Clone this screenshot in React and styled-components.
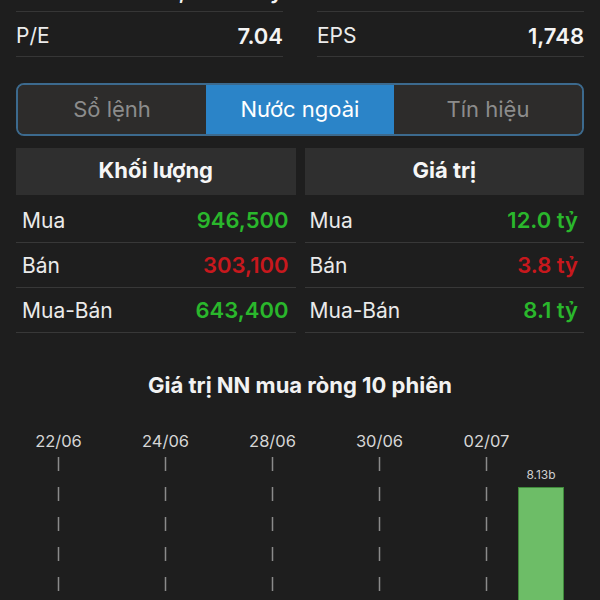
import React from "react";
import styled, { createGlobalStyle } from "styled-components";

const Global = createGlobalStyle`
  html, body { margin: 0; padding: 0; background: #1e1e1e; overflow: hidden; }
  body { font-family: Inter, "Noto Sans", "Liberation Sans", sans-serif; color: #ececec; }
  * { box-sizing: border-box; }
`;

const Page = styled.div`
  width: 600px;
  height: 600px;
  overflow: hidden;
  background: #1e1e1e;
`;

const Scroller = styled.div`
  margin-top: -33px;
  padding: 0 16px;
`;

const StatGrid = styled.div`
  display: grid;
  grid-template-columns: 1fr 1fr;
  column-gap: 34px;
`;

const StatCol = styled.div`
  display: flex;
  flex-direction: column;
`;

const StatRow = styled.div`
  height: 45px;
  padding-top: 3px;
  display: flex;
  align-items: center;
  justify-content: space-between;
  border-bottom: 1px solid #363636;
`;

const StatLabel = styled.span`
  color: #ececec;
  font-size: 21px;
  font-weight: 400;
`;

const StatValue = styled.span`
  color: #f4f4f4;
  font-size: 22px;
  font-weight: 600;
`;

const Tabs = styled.div`
  margin-top: 26px;
  height: 53px;
  display: grid;
  grid-template-columns: 1fr 1fr 1fr;
  border: 2px solid #3c6a8e;
  border-radius: 8px;
  overflow: hidden;
  background: #2d2c2b;
`;

const Tab = styled.div`
  display: flex;
  align-items: center;
  justify-content: center;
  padding-bottom: 2px;
  font-size: 22px;
  color: ${(p) => (p.$active ? "#ffffff" : "#8c8c8c")};
  background: ${(p) => (p.$active ? "#2b84c8" : "#2d2c2b")};
`;

const Tables = styled.div`
  margin-top: 12px;
  display: grid;
  grid-template-columns: 1fr 1fr;
  column-gap: 9px;
`;

const Table = styled.div`
  display: flex;
  flex-direction: column;
`;

const Header = styled.div`
  height: 47px;
  background: #2f2f2f;
  display: flex;
  align-items: center;
  justify-content: center;
  padding-bottom: 3px;
  font-size: 22px;
  font-weight: 700;
  color: #f6f6f6;
  margin-bottom: 3px;
`;

const Row = styled.div`
  height: 45px;
  display: flex;
  align-items: center;
  justify-content: space-between;
  padding: 0 ${(p) => p.$padR}px 0 ${(p) => p.$padL}px;
  border-bottom: 1px solid #383838;
`;

const RowLabel = styled.span`
  font-size: 21px;
  color: #eaeaea;
`;

const RowValue = styled.span`
  font-size: 22px;
  font-weight: 600;
  color: ${(p) => (p.$tone === "up" ? "#2ab72c" : "#c8181d")};
`;

const ChartTitle = styled.div`
  margin-top: 40px;
  height: 24px;
  line-height: 24px;
  text-align: center;
  font-size: 22px;
  font-weight: 700;
  color: #f2f2f2;
`;

const ChartSvg = styled.svg`
  display: block;
  margin: 23px -16px 0;
  width: 600px;
  height: 180px;
`;

const volume = [
  { label: "Mua", value: "946,500", tone: "up" },
  { label: "Bán", value: "303,100", tone: "down" },
  { label: "Mua-Bán", value: "643,400", tone: "up" },
];

const valueRows = [
  { label: "Mua", value: "12.0 tỷ", tone: "up" },
  { label: "Bán", value: "3.8 tỷ", tone: "down" },
  { label: "Mua-Bán", value: "8.1 tỷ", tone: "up" },
];

const dates = [
  { x: 58.5, t: "22/06" },
  { x: 165.5, t: "24/06" },
  { x: 272.5, t: "28/06" },
  { x: 379.5, t: "30/06" },
  { x: 486.5, t: "02/07" },
];

function Chart() {
  return (
    <ChartSvg viewBox="0 0 600 180">
      {dates.map((d) => (
        <g key={d.t}>
          <text
            x={d.x}
            y={27}
            textAnchor="middle"
            fontSize="16.5"
            fill="#d6d6d6"
            fontFamily="Inter, 'Noto Sans', sans-serif"
          >
            {d.t}
          </text>
          <line
            x1={d.x}
            x2={d.x}
            y1={37}
            y2={180}
            stroke="#8a8a8a"
            strokeWidth="1.5"
            strokeDasharray="14 16"
          />
        </g>
      ))}
      <text
        x={541}
        y={58.5}
        textAnchor="middle"
        fontSize="12"
        fill="#cfcfcf"
        fontFamily="Inter, 'Noto Sans', sans-serif"
      >
        8.13b
      </text>
      <rect x={518.5} y={67.5} width={45} height={120} fill="#6dbd67" stroke="#3f8a3b" strokeWidth="1" />
    </ChartSvg>
  );
}

export default function App() {
  return (
    <Page>
      <Global />
      <Scroller>
        <StatGrid>
          <StatCol>
            <StatRow>
              <StatLabel>Vốn hóa</StatLabel>
              <StatValue>1,812.35 tỷ</StatValue>
            </StatRow>
            <StatRow>
              <StatLabel>P/E</StatLabel>
              <StatValue>7.04</StatValue>
            </StatRow>
          </StatCol>
          <StatCol>
            <StatRow>
              <StatLabel>Beta</StatLabel>
              <StatValue>0.86</StatValue>
            </StatRow>
            <StatRow>
              <StatLabel>EPS</StatLabel>
              <StatValue>1,748</StatValue>
            </StatRow>
          </StatCol>
        </StatGrid>

        <Tabs>
          <Tab>Sổ lệnh</Tab>
          <Tab $active>Nước ngoài</Tab>
          <Tab>Tín hiệu</Tab>
        </Tabs>

        <Tables>
          <Table>
            <Header>Khối lượng</Header>
            {volume.map((r) => (
              <Row key={r.label} $padL={6} $padR={7}>
                <RowLabel>{r.label}</RowLabel>
                <RowValue $tone={r.tone}>{r.value}</RowValue>
              </Row>
            ))}
          </Table>
          <Table>
            <Header>Giá trị</Header>
            {valueRows.map((r) => (
              <Row key={r.label} $padL={5} $padR={6}>
                <RowLabel>{r.label}</RowLabel>
                <RowValue $tone={r.tone}>{r.value}</RowValue>
              </Row>
            ))}
          </Table>
        </Tables>

        <ChartTitle>Giá trị NN mua ròng 10 phiên</ChartTitle>
        <Chart />
      </Scroller>
    </Page>
  );
}
